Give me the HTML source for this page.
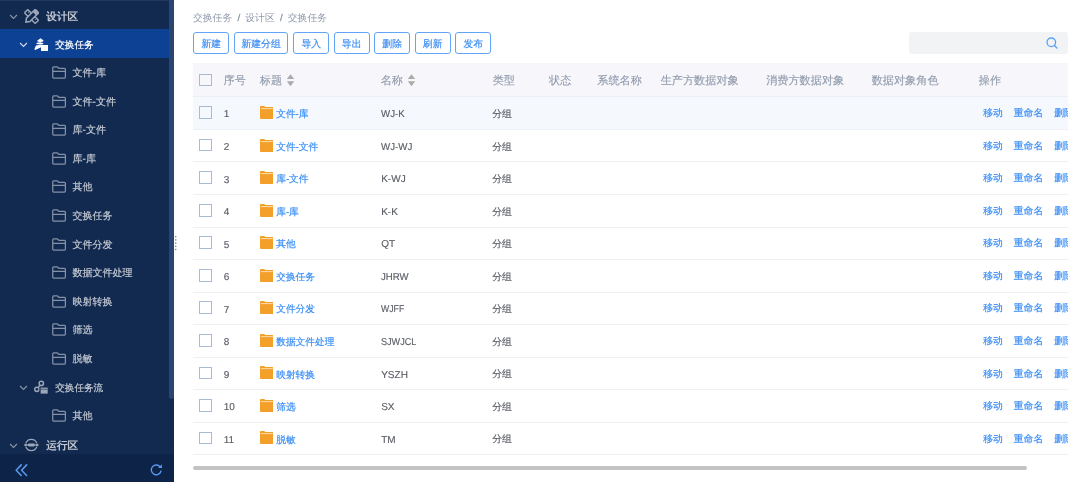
<!DOCTYPE html>
<html><head><meta charset="utf-8"><style>
*{margin:0;padding:0;box-sizing:border-box}
html,body{width:1080px;height:482px;overflow:hidden;background:#fff;font-family:"Liberation Sans",sans-serif;text-rendering:geometricPrecision}
#side{position:absolute;left:0;top:0;width:174px;height:482px;background:#132a50;overflow:hidden}
.srow{position:absolute;left:0;width:169px;height:28.6px;color:#c3c9d3}
.srow.sel{background:#0c4193;color:#fff}
.srow>span{position:absolute;display:block;line-height:1;white-space:nowrap}
.srow svg{display:block}
.c0{left:9.4px;top:13.05px;color:#8794aa}
.c1{left:18.8px;top:12.6px;color:#8794aa}
.sel .c1{color:#d0dcf2}
.i0{left:24.2px;top:8.0px}
.i0.run{left:24.4px;top:4.35px}
.i1{left:31px;top:5.7px}
.i1.flow{left:32.2px;top:4.1px}
.i2{left:51.9px;top:8.35px}
.t0{left:46.3px;top:11.4px;font-size:10.6px;font-weight:bold}
.t1,.t2{-webkit-text-stroke:0.2px currentColor}
.t1{left:55.2px;top:11.7px;font-size:9.6px}
.t2{left:72.6px;top:11.3px;font-size:10px}
#thumb{position:absolute;left:168.8px;top:-4px;width:5.4px;height:403.3px;background:#2a4570;border-radius:2.5px}
#sbot{position:absolute;left:0;top:454px;width:174px;height:28px;background:#0e2348}
#dots{position:absolute;left:175px;top:236px;width:2px;height:16px}
#wrap{position:absolute;left:0;top:0;width:1080px;height:482px;will-change:transform}
#clip{position:absolute;left:0;top:0;width:1068px;height:482px;overflow:hidden}
.sep{margin:0 5.2px;display:inline-block;-webkit-text-stroke:0.3px #8e98aa}
.bc{position:absolute;left:193px;top:13.6px;font-size:9.8px;color:#8e98aa;white-space:nowrap;line-height:1}
.btn{position:absolute;top:31.8px;height:22px;border:1.1px solid #62a5f7;border-radius:3px;color:#3f8ff5;font-size:9.8px;text-align:center;line-height:24.5px;background:#fff;-webkit-text-stroke:0.2px #3f8ff5;white-space:nowrap}
.search{position:absolute;left:909.4px;top:31.7px;width:158.6px;height:22px;background:#f2f3f5;border-radius:3px}
.thead{position:absolute;left:193px;top:63px;width:875px;height:34.4px;background:#f7f7fb;border-bottom:1px solid #eceff5}
.th{position:absolute;top:13.0px;font-size:11.15px;color:#929cad;-webkit-text-stroke:0.15px #929cad;white-space:nowrap;line-height:1}
.sort{position:absolute;top:10.6px;width:9px;height:13px}
.trow{position:absolute;left:193px;width:875px;border-bottom:1px solid #edf0f5;background:#fff}
.trow.hov{background:#f5f8fd}
.trow>span{position:absolute;line-height:1;white-space:nowrap}
.cb{left:6.2px;width:12.8px;height:12.7px;border:1.25px solid #a8bad4;top:8.8px}
.num{left:30.8px;top:13.1px;font-size:10px;color:#5b5e66;-webkit-text-stroke:0.15px #5b5e66}
.fic{left:66.6px;top:8.6px}
.fic svg{display:block}
.sx{display:inline-block;transform-origin:0 0}
.ttl{left:83.2px;top:12.8px;font-size:9.7px;color:#3a8ef6;-webkit-text-stroke:0.2px #3a8ef6}
.nm{left:188.2px;top:12.8px;font-size:10px;color:#5b5e66;-webkit-text-stroke:0.15px #5b5e66}
.typ{left:299.3px;top:12.6px;font-size:9.8px;color:#5b5e66;-webkit-text-stroke:0.15px #5b5e66}
.ops{left:790.2px;top:11.8px;font-size:9.8px;color:#3a8ef6;-webkit-text-stroke:0.2px #3a8ef6}
.ops span{margin-right:11px}
.hscroll{position:absolute;left:193px;top:465.6px;width:834px;height:4.5px;background:#c3c3c3;border-radius:3px}
</style></head><body><div id="wrap">
<div id="clip">
<div class="bc">交换任务<span class="sep">/</span>设计区<span class="sep">/</span>交换任务</div>
<div class="btn" style="left:193.1px;width:36.3px">新建</div>
<div class="btn" style="left:233.9px;width:54.4px">新建分组</div>
<div class="btn" style="left:293.1px;width:36.3px">导入</div>
<div class="btn" style="left:333.5px;width:36.3px">导出</div>
<div class="btn" style="left:374px;width:36.3px">删除</div>
<div class="btn" style="left:414.5px;width:36.3px">刷新</div>
<div class="btn" style="left:455.1px;width:36.3px">发布</div>
<div class="search"><svg style="position:absolute;left:137px;top:5.2px" width="12" height="12" viewBox="0 0 12 12"><circle cx="5.3" cy="5.3" r="4.3" fill="none" stroke="#5aa2f6" stroke-width="1.3"/><path d="M8.4 8.4 L10.9 10.9" stroke="#5aa2f6" stroke-width="1.4" stroke-linecap="round"/></svg></div>
<div class="thead">
<span class="cb" style="position:absolute;top:10.8px"></span>
<span class="th" style="left:30.5px">序号</span>
<span class="th" style="left:66.8px">标题</span><span class="sort" style="left:92.6px"><svg style="position:absolute;top:0;left:0" width="9" height="13" viewBox="0 0 9 13"><path d="M4.5 0.2 L8.2 5 L0.8 5 Z M4.5 12.2 L8.2 7.3 L0.8 7.3 Z" fill="#ababab"/></svg></span>
<span class="th" style="left:187.7px">名称</span><span class="sort" style="left:214.3px"><svg style="position:absolute;top:0;left:0" width="9" height="13" viewBox="0 0 9 13"><path d="M4.5 0.2 L8.2 5 L0.8 5 Z M4.5 12.2 L8.2 7.3 L0.8 7.3 Z" fill="#ababab"/></svg></span>
<span class="th" style="left:299.7px">类型</span>
<span class="th" style="left:356px">状态</span>
<span class="th" style="left:404.3px">系统名称</span>
<span class="th" style="left:467.7px">生产方数据对象</span>
<span class="th" style="left:573.2px">消费方数据对象</span>
<span class="th" style="left:678.7px">数据对象角色</span>
<span class="th" style="left:785.8px">操作</span>
</div>
<div class="trow hov" style="top:97.400px;height:32.545px"><span class="cb"></span><span class="num">1</span><span class="fic"><svg width="13.6" height="13" viewBox="0 0 14 13" preserveAspectRatio="none"><path d="M0 0.9 Q0 0 0.9 0 L4.4 0 L5.4 1 L13.1 1 Q14 1 14 1.9 L14 12.1 Q14 13 13.1 13 L0.9 13 Q0 13 0 12.1 Z" fill="#f3a02a"/><rect x="0.9" y="2.2" width="12.2" height="0.9" fill="#fde3bb"/></svg></span><span class="ttl">文件-库</span><span class="nm"><span class="sx" style="transform:scaleX(0.97)">WJ-K</span></span><span class="typ">分组</span><span class="ops"><span>移动</span><span>重命名</span><span>删除</span></span></div><div class="trow" style="top:129.945px;height:32.545px"><span class="cb"></span><span class="num">2</span><span class="fic"><svg width="13.6" height="13" viewBox="0 0 14 13" preserveAspectRatio="none"><path d="M0 0.9 Q0 0 0.9 0 L4.4 0 L5.4 1 L13.1 1 Q14 1 14 1.9 L14 12.1 Q14 13 13.1 13 L0.9 13 Q0 13 0 12.1 Z" fill="#f3a02a"/><rect x="0.9" y="2.2" width="12.2" height="0.9" fill="#fde3bb"/></svg></span><span class="ttl">文件-文件</span><span class="nm"><span class="sx" style="transform:scaleX(0.97)">WJ-WJ</span></span><span class="typ">分组</span><span class="ops"><span>移动</span><span>重命名</span><span>删除</span></span></div><div class="trow" style="top:162.490px;height:32.545px"><span class="cb"></span><span class="num">3</span><span class="fic"><svg width="13.6" height="13" viewBox="0 0 14 13" preserveAspectRatio="none"><path d="M0 0.9 Q0 0 0.9 0 L4.4 0 L5.4 1 L13.1 1 Q14 1 14 1.9 L14 12.1 Q14 13 13.1 13 L0.9 13 Q0 13 0 12.1 Z" fill="#f3a02a"/><rect x="0.9" y="2.2" width="12.2" height="0.9" fill="#fde3bb"/></svg></span><span class="ttl">库-文件</span><span class="nm"><span class="sx" style="transform:scaleX(1)">K-WJ</span></span><span class="typ">分组</span><span class="ops"><span>移动</span><span>重命名</span><span>删除</span></span></div><div class="trow" style="top:195.035px;height:32.545px"><span class="cb"></span><span class="num">4</span><span class="fic"><svg width="13.6" height="13" viewBox="0 0 14 13" preserveAspectRatio="none"><path d="M0 0.9 Q0 0 0.9 0 L4.4 0 L5.4 1 L13.1 1 Q14 1 14 1.9 L14 12.1 Q14 13 13.1 13 L0.9 13 Q0 13 0 12.1 Z" fill="#f3a02a"/><rect x="0.9" y="2.2" width="12.2" height="0.9" fill="#fde3bb"/></svg></span><span class="ttl">库-库</span><span class="nm"><span class="sx" style="transform:scaleX(1)">K-K</span></span><span class="typ">分组</span><span class="ops"><span>移动</span><span>重命名</span><span>删除</span></span></div><div class="trow" style="top:227.580px;height:32.545px"><span class="cb"></span><span class="num">5</span><span class="fic"><svg width="13.6" height="13" viewBox="0 0 14 13" preserveAspectRatio="none"><path d="M0 0.9 Q0 0 0.9 0 L4.4 0 L5.4 1 L13.1 1 Q14 1 14 1.9 L14 12.1 Q14 13 13.1 13 L0.9 13 Q0 13 0 12.1 Z" fill="#f3a02a"/><rect x="0.9" y="2.2" width="12.2" height="0.9" fill="#fde3bb"/></svg></span><span class="ttl">其他</span><span class="nm"><span class="sx" style="transform:scaleX(1)">QT</span></span><span class="typ">分组</span><span class="ops"><span>移动</span><span>重命名</span><span>删除</span></span></div><div class="trow" style="top:260.125px;height:32.545px"><span class="cb"></span><span class="num">6</span><span class="fic"><svg width="13.6" height="13" viewBox="0 0 14 13" preserveAspectRatio="none"><path d="M0 0.9 Q0 0 0.9 0 L4.4 0 L5.4 1 L13.1 1 Q14 1 14 1.9 L14 12.1 Q14 13 13.1 13 L0.9 13 Q0 13 0 12.1 Z" fill="#f3a02a"/><rect x="0.9" y="2.2" width="12.2" height="0.9" fill="#fde3bb"/></svg></span><span class="ttl">交换任务</span><span class="nm"><span class="sx" style="transform:scaleX(0.96)">JHRW</span></span><span class="typ">分组</span><span class="ops"><span>移动</span><span>重命名</span><span>删除</span></span></div><div class="trow" style="top:292.670px;height:32.545px"><span class="cb"></span><span class="num">7</span><span class="fic"><svg width="13.6" height="13" viewBox="0 0 14 13" preserveAspectRatio="none"><path d="M0 0.9 Q0 0 0.9 0 L4.4 0 L5.4 1 L13.1 1 Q14 1 14 1.9 L14 12.1 Q14 13 13.1 13 L0.9 13 Q0 13 0 12.1 Z" fill="#f3a02a"/><rect x="0.9" y="2.2" width="12.2" height="0.9" fill="#fde3bb"/></svg></span><span class="ttl">文件分发</span><span class="nm"><span class="sx" style="transform:scaleX(0.87)">WJFF</span></span><span class="typ">分组</span><span class="ops"><span>移动</span><span>重命名</span><span>删除</span></span></div><div class="trow" style="top:325.215px;height:32.545px"><span class="cb"></span><span class="num">8</span><span class="fic"><svg width="13.6" height="13" viewBox="0 0 14 13" preserveAspectRatio="none"><path d="M0 0.9 Q0 0 0.9 0 L4.4 0 L5.4 1 L13.1 1 Q14 1 14 1.9 L14 12.1 Q14 13 13.1 13 L0.9 13 Q0 13 0 12.1 Z" fill="#f3a02a"/><rect x="0.9" y="2.2" width="12.2" height="0.9" fill="#fde3bb"/></svg></span><span class="ttl">数据文件处理</span><span class="nm"><span class="sx" style="transform:scaleX(0.91)">SJWJCL</span></span><span class="typ">分组</span><span class="ops"><span>移动</span><span>重命名</span><span>删除</span></span></div><div class="trow" style="top:357.760px;height:32.545px"><span class="cb"></span><span class="num">9</span><span class="fic"><svg width="13.6" height="13" viewBox="0 0 14 13" preserveAspectRatio="none"><path d="M0 0.9 Q0 0 0.9 0 L4.4 0 L5.4 1 L13.1 1 Q14 1 14 1.9 L14 12.1 Q14 13 13.1 13 L0.9 13 Q0 13 0 12.1 Z" fill="#f3a02a"/><rect x="0.9" y="2.2" width="12.2" height="0.9" fill="#fde3bb"/></svg></span><span class="ttl">映射转换</span><span class="nm"><span class="sx" style="transform:scaleX(1)">YSZH</span></span><span class="typ">分组</span><span class="ops"><span>移动</span><span>重命名</span><span>删除</span></span></div><div class="trow" style="top:390.305px;height:32.545px"><span class="cb"></span><span class="num">10</span><span class="fic"><svg width="13.6" height="13" viewBox="0 0 14 13" preserveAspectRatio="none"><path d="M0 0.9 Q0 0 0.9 0 L4.4 0 L5.4 1 L13.1 1 Q14 1 14 1.9 L14 12.1 Q14 13 13.1 13 L0.9 13 Q0 13 0 12.1 Z" fill="#f3a02a"/><rect x="0.9" y="2.2" width="12.2" height="0.9" fill="#fde3bb"/></svg></span><span class="ttl">筛选</span><span class="nm"><span class="sx" style="transform:scaleX(1)">SX</span></span><span class="typ">分组</span><span class="ops"><span>移动</span><span>重命名</span><span>删除</span></span></div><div class="trow" style="top:422.850px;height:32.545px"><span class="cb"></span><span class="num">11</span><span class="fic"><svg width="13.6" height="13" viewBox="0 0 14 13" preserveAspectRatio="none"><path d="M0 0.9 Q0 0 0.9 0 L4.4 0 L5.4 1 L13.1 1 Q14 1 14 1.9 L14 12.1 Q14 13 13.1 13 L0.9 13 Q0 13 0 12.1 Z" fill="#f3a02a"/><rect x="0.9" y="2.2" width="12.2" height="0.9" fill="#fde3bb"/></svg></span><span class="ttl">脱敏</span><span class="nm"><span class="sx" style="transform:scaleX(1)">TM</span></span><span class="typ">分组</span><span class="ops"><span>移动</span><span>重命名</span><span>删除</span></span></div>
</div>
<div class="hscroll"></div>
<div id="side">
<div class="srow" style="top:0.50px"><span class="c0"><svg class="chev" width="9" height="6" viewBox="0 0 9 6"><path d="M1.1 1.0 L4.5 4.5 L7.9 1.0" fill="none" stroke="currentColor" stroke-width="1.15"/></svg></span><span class="i0 design"><svg width="15" height="15" viewBox="0 0 14 14"><g transform="rotate(45 7 7)"><rect x="-0.1" y="4.8" width="14.2" height="4.4" rx="0.6" fill="none" stroke="#9ba6b9" stroke-width="1.3"/><path d="M2.3 4.8 V6.6 M4.6 4.8 V6.2 M9.4 4.8 V6.2 M11.7 4.8 V6.6" stroke="#9ba6b9" stroke-width="0.9"/></g><g transform="rotate(-45 7 7)"><path d="M-0.4 7 L2.6 4.75 H14.2 V9.25 H2.6 Z" fill="#132a50" stroke="#9ba6b9" stroke-width="1.4"/><rect x="10.8" y="4.6" width="3.5" height="4.8" fill="#9ba6b9"/></g></svg></span><span class="t0">设计区</span></div><div class="srow sel" style="top:29.10px"><span class="c1"><svg class="chev" width="9" height="6" viewBox="0 0 9 6"><path d="M1.1 1.0 L4.5 4.5 L7.9 1.0" fill="none" stroke="currentColor" stroke-width="1.15"/></svg></span><span class="i1 task"><svg width="20" height="20" viewBox="0 0 20 20"><g fill="#fff"><path d="M5.8 6.0 L9.5 3.3 L12.3 5.3 L12.3 6.5 L8.8 7.2 Z"/><path d="M5.2 9.0 L6.0 7.7 L9.5 7.3 L12.4 8.3 L12.2 9.3 L9.6 9.5 Z"/><path d="M3.3 14.3 L5.0 10.4 L9.6 9.8 L10.2 10.4 L10.2 12.2 L4.2 14.9 Z"/><rect x="10" y="10" width="7" height="6"/></g></svg></span><span class="t1">交换任务</span></div><div class="srow" style="top:57.70px"><span class="i2"><svg width="15" height="13" viewBox="0 0 15 13"><path d="M0.75 11.1 V1.7 Q0.75 0.75 1.7 0.75 H5.2 L6.9 2.3 H12.4 Q13.4 2.3 13.4 3.2 V11.1 Q13.4 12.05 12.4 12.05 H1.7 Q0.75 12.05 0.75 11.1 Z M0.75 5.3 H13.4" fill="none" stroke="#8591a7" stroke-width="1.25"/></svg></span><span class="t2">文件-库</span></div><div class="srow" style="top:86.30px"><span class="i2"><svg width="15" height="13" viewBox="0 0 15 13"><path d="M0.75 11.1 V1.7 Q0.75 0.75 1.7 0.75 H5.2 L6.9 2.3 H12.4 Q13.4 2.3 13.4 3.2 V11.1 Q13.4 12.05 12.4 12.05 H1.7 Q0.75 12.05 0.75 11.1 Z M0.75 5.3 H13.4" fill="none" stroke="#8591a7" stroke-width="1.25"/></svg></span><span class="t2">文件-文件</span></div><div class="srow" style="top:114.90px"><span class="i2"><svg width="15" height="13" viewBox="0 0 15 13"><path d="M0.75 11.1 V1.7 Q0.75 0.75 1.7 0.75 H5.2 L6.9 2.3 H12.4 Q13.4 2.3 13.4 3.2 V11.1 Q13.4 12.05 12.4 12.05 H1.7 Q0.75 12.05 0.75 11.1 Z M0.75 5.3 H13.4" fill="none" stroke="#8591a7" stroke-width="1.25"/></svg></span><span class="t2">库-文件</span></div><div class="srow" style="top:143.50px"><span class="i2"><svg width="15" height="13" viewBox="0 0 15 13"><path d="M0.75 11.1 V1.7 Q0.75 0.75 1.7 0.75 H5.2 L6.9 2.3 H12.4 Q13.4 2.3 13.4 3.2 V11.1 Q13.4 12.05 12.4 12.05 H1.7 Q0.75 12.05 0.75 11.1 Z M0.75 5.3 H13.4" fill="none" stroke="#8591a7" stroke-width="1.25"/></svg></span><span class="t2">库-库</span></div><div class="srow" style="top:172.10px"><span class="i2"><svg width="15" height="13" viewBox="0 0 15 13"><path d="M0.75 11.1 V1.7 Q0.75 0.75 1.7 0.75 H5.2 L6.9 2.3 H12.4 Q13.4 2.3 13.4 3.2 V11.1 Q13.4 12.05 12.4 12.05 H1.7 Q0.75 12.05 0.75 11.1 Z M0.75 5.3 H13.4" fill="none" stroke="#8591a7" stroke-width="1.25"/></svg></span><span class="t2">其他</span></div><div class="srow" style="top:200.70px"><span class="i2"><svg width="15" height="13" viewBox="0 0 15 13"><path d="M0.75 11.1 V1.7 Q0.75 0.75 1.7 0.75 H5.2 L6.9 2.3 H12.4 Q13.4 2.3 13.4 3.2 V11.1 Q13.4 12.05 12.4 12.05 H1.7 Q0.75 12.05 0.75 11.1 Z M0.75 5.3 H13.4" fill="none" stroke="#8591a7" stroke-width="1.25"/></svg></span><span class="t2">交换任务</span></div><div class="srow" style="top:229.30px"><span class="i2"><svg width="15" height="13" viewBox="0 0 15 13"><path d="M0.75 11.1 V1.7 Q0.75 0.75 1.7 0.75 H5.2 L6.9 2.3 H12.4 Q13.4 2.3 13.4 3.2 V11.1 Q13.4 12.05 12.4 12.05 H1.7 Q0.75 12.05 0.75 11.1 Z M0.75 5.3 H13.4" fill="none" stroke="#8591a7" stroke-width="1.25"/></svg></span><span class="t2">文件分发</span></div><div class="srow" style="top:257.90px"><span class="i2"><svg width="15" height="13" viewBox="0 0 15 13"><path d="M0.75 11.1 V1.7 Q0.75 0.75 1.7 0.75 H5.2 L6.9 2.3 H12.4 Q13.4 2.3 13.4 3.2 V11.1 Q13.4 12.05 12.4 12.05 H1.7 Q0.75 12.05 0.75 11.1 Z M0.75 5.3 H13.4" fill="none" stroke="#8591a7" stroke-width="1.25"/></svg></span><span class="t2">数据文件处理</span></div><div class="srow" style="top:286.50px"><span class="i2"><svg width="15" height="13" viewBox="0 0 15 13"><path d="M0.75 11.1 V1.7 Q0.75 0.75 1.7 0.75 H5.2 L6.9 2.3 H12.4 Q13.4 2.3 13.4 3.2 V11.1 Q13.4 12.05 12.4 12.05 H1.7 Q0.75 12.05 0.75 11.1 Z M0.75 5.3 H13.4" fill="none" stroke="#8591a7" stroke-width="1.25"/></svg></span><span class="t2">映射转换</span></div><div class="srow" style="top:315.10px"><span class="i2"><svg width="15" height="13" viewBox="0 0 15 13"><path d="M0.75 11.1 V1.7 Q0.75 0.75 1.7 0.75 H5.2 L6.9 2.3 H12.4 Q13.4 2.3 13.4 3.2 V11.1 Q13.4 12.05 12.4 12.05 H1.7 Q0.75 12.05 0.75 11.1 Z M0.75 5.3 H13.4" fill="none" stroke="#8591a7" stroke-width="1.25"/></svg></span><span class="t2">筛选</span></div><div class="srow" style="top:343.70px"><span class="i2"><svg width="15" height="13" viewBox="0 0 15 13"><path d="M0.75 11.1 V1.7 Q0.75 0.75 1.7 0.75 H5.2 L6.9 2.3 H12.4 Q13.4 2.3 13.4 3.2 V11.1 Q13.4 12.05 12.4 12.05 H1.7 Q0.75 12.05 0.75 11.1 Z M0.75 5.3 H13.4" fill="none" stroke="#8591a7" stroke-width="1.25"/></svg></span><span class="t2">脱敏</span></div><div class="srow" style="top:372.30px"><span class="c1"><svg class="chev" width="9" height="6" viewBox="0 0 9 6"><path d="M1.1 1.0 L4.5 4.5 L7.9 1.0" fill="none" stroke="currentColor" stroke-width="1.15"/></svg></span><span class="i1 flow"><svg width="20" height="20" viewBox="0 0 20 20"><g fill="none" stroke="#9ba6b9" stroke-width="1.45"><circle cx="9.3" cy="7.4" r="2.15"/><circle cx="4.9" cy="13.3" r="2.15"/><path d="M8.0 9.3 L6.3 11.4"/></g><rect x="8.4" y="11.6" width="7.3" height="6" fill="#9ba6b9"/><rect x="8.4" y="12.9" width="7.3" height="0.55" fill="#132a50"/><rect x="7.6" y="11.6" width="0.8" height="6" fill="#132a50"/></svg></span><span class="t1">交换任务流</span></div><div class="srow" style="top:400.90px"><span class="i2"><svg width="15" height="13" viewBox="0 0 15 13"><path d="M0.75 11.1 V1.7 Q0.75 0.75 1.7 0.75 H5.2 L6.9 2.3 H12.4 Q13.4 2.3 13.4 3.2 V11.1 Q13.4 12.05 12.4 12.05 H1.7 Q0.75 12.05 0.75 11.1 Z M0.75 5.3 H13.4" fill="none" stroke="#8591a7" stroke-width="1.25"/></svg></span><span class="t2">其他</span></div><div class="srow" style="top:429.50px"><span class="c0"><svg class="chev" width="9" height="6" viewBox="0 0 9 6"><path d="M1.1 1.0 L4.5 4.5 L7.9 1.0" fill="none" stroke="currentColor" stroke-width="1.15"/></svg></span><span class="i0 run"><svg width="20" height="20" viewBox="0 0 20 20"><g fill="none" stroke="#9ba6b9" stroke-width="1.2"><path d="M1.8 9.2 A5.85 5.85 0 0 1 12.8 9.2"/><path d="M1.8 12.8 A5.85 5.85 0 0 0 12.8 12.8"/><path d="M1 11 H13.6" stroke-width="1.1"/></g><g fill="#9ba6b9"><circle cx="1.6" cy="11" r="1.35"/><circle cx="13.2" cy="11" r="1.35"/><rect x="3.8" y="9.5" width="7.2" height="3" rx="1.4"/></g></svg></span><span class="t0">运行区</span></div>
<div id="thumb"></div><div style="position:absolute;left:0;top:0;width:169px;height:1.3px;background:#213659"></div>
<div id="sbot">
<svg style="position:absolute;left:14.5px;top:9.6px" width="13" height="13" viewBox="0 0 13 13"><path d="M6.2 0.9 L1.2 6.2 L6.2 11.5 M11.6 0.9 L6.6 6.2 L11.6 11.5" fill="none" stroke="#5898ea" stroke-width="1.6" stroke-linecap="round" stroke-linejoin="round"/></svg>
<svg style="position:absolute;left:150px;top:9.2px" width="13" height="13" viewBox="0 0 13 13"><path d="M10.4 4.3 A4.9 4.9 0 1 0 11.1 7.6" fill="none" stroke="#5b9cf2" stroke-width="1.35"/><path d="M11.9 1.3 L11.9 5.1 L8.2 5.1 Z" fill="#5b9cf2"/></svg>
</div>
</div>
<svg id="dots" viewBox="0 0 2 16"><g fill="#8c8c8c"><rect x="0" y="0" width="1.4" height="1.4"/><rect x="0" y="3.2" width="1.4" height="1.4"/><rect x="0" y="6.4" width="1.4" height="1.4"/><rect x="0" y="9.6" width="1.4" height="1.4"/><rect x="0" y="12.8" width="1.4" height="1.4"/></g></svg>
</div></body></html>
